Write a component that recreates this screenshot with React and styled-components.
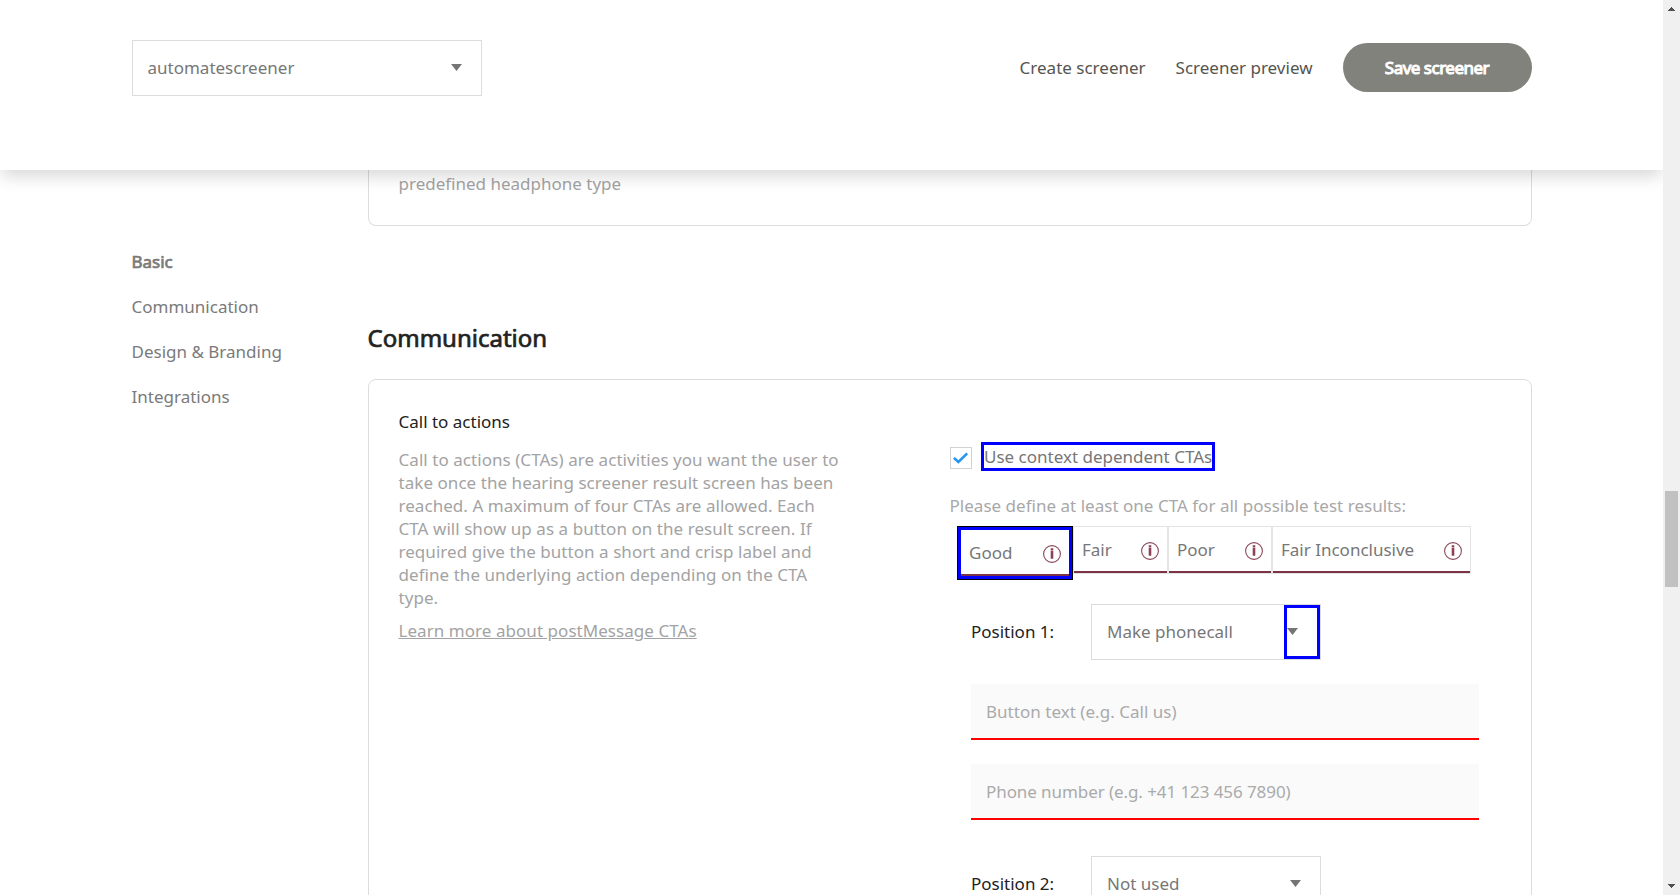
import React from "react";
import styled, { createGlobalStyle, css } from "styled-components";

const GlobalStyle = createGlobalStyle`
  * { box-sizing: border-box; }
  html, body { margin: 0; height: 100%; overflow: hidden; background: #fff; }
  body, input, button {
    font-family: "Noto Sans", "Open Sans", sans-serif;
    font-size: 17px;
    line-height: 23px;
  }
`;

const fauxBold = css`
  font-weight: 400;
  -webkit-text-stroke: 0.7px currentColor;
`;

const Page = styled.div`
  display: grid;
  grid-template-columns: minmax(0, 1fr) 17px;
  height: 895px;
  overflow: hidden;
`;

const Viewport = styled.div`
  display: flex;
  flex-direction: column;
  height: 895px;
  overflow: hidden;
`;

const Header = styled.header`
  position: relative;
  z-index: 1;
  flex: none;
  height: 170px;
  padding: 40px 131.5px 0;
  display: flex;
  justify-content: space-between;
  align-items: flex-start;
  background: #fff;
  box-shadow: 0 8px 16px -2px rgba(0, 0, 0, 0.16);
`;

const HeaderActions = styled.nav`
  display: flex;
  align-items: center;
  height: 56px;
  gap: 30px;
`;

const HeaderLink = styled.a`
  margin-top: -2px;
  color: #555550;
`;

const SaveButton = styled.button`
  width: 189px;
  height: 49px;
  padding: 0;
  margin-top: -1px;
  border: 0;
  border-radius: 25px;
  background: #82827d;
  color: #fff;
  font-weight: 400;
  letter-spacing: -0.5px;
  -webkit-text-stroke: 1px currentColor;
`;

const SelectBox = styled.div`
  display: flex;
  align-items: center;
  justify-content: space-between;
  width: ${(p) => p.$width}px;
  height: 56px;
  padding: 0 ${(p) => (p.$highlighted ? 0 : 19)}px 0 15px;
  border: 1px solid #dcdcdc;
  background: #fff;
  color: #777;
`;

const SelectValue = styled.span`
  margin-top: -2px;
`;

const ArrowHighlight = styled.span`
  display: flex;
  align-items: center;
  width: 36px;
  height: 54px;
  border: 3px solid #00f;
`;

const Arrow = styled.svg`
  display: block;
  width: 11px;
  height: 7px;
  margin-top: -2px;
  fill: #757575;
`;

const Body = styled.div`
  display: grid;
  grid-template-columns: 236px 1164px;
  padding-left: 131.5px;
`;

const SideNav = styled.nav`
  display: flex;
  flex-direction: column;
  gap: 22px;
  padding-top: 80px;
`;

const SideLink = styled.a`
  color: #7a7a7a;
  ${(p) => p.$active && fauxBold}
`;

const Content = styled.main`
  display: flex;
  flex-direction: column;
`;

const PreviousCard = styled.section`
  height: 56px;
  padding: 2px 30px 0;
  border: 1px solid #dcdcdc;
  border-top: 0;
  border-radius: 0 0 8px 8px;
  color: #a3a3a3;
`;

const Heading = styled.h2`
  ${fauxBold}
  margin: 95px 0 25px;
  font-size: 24px;
  line-height: 33px;
  color: #222;
`;

const Card = styled.section`
  display: grid;
  grid-template-columns: 551px 1fr;
  height: 560px;
  padding: 30px 30px 0;
  border: 1px solid #dcdcdc;
  border-radius: 8px;
`;

const Description = styled.div`
  width: 444px;
  color: #a3a3a3;
  letter-spacing: 0.05px;
`;

const Title = styled.h3`
  margin: 0 0 15px;
  font-size: 17px;
  font-weight: 400;
  letter-spacing: 0;
  color: #222;
`;

const Paragraph = styled.p`
  margin: 0 0 10px;
`;

const Link = styled.a`
  text-decoration: underline;
`;

const Settings = styled.div`
  padding-top: 32px;
`;

const CheckRow = styled.label`
  display: flex;
  align-items: flex-start;
  gap: 9.5px;
`;

const Checkbox = styled.span`
  display: flex;
  width: 22px;
  height: 22px;
  margin-top: 5px;
  border: 1px solid #d2d2d2;
`;

const CheckLabel = styled.span`
  height: 29px;
  border: 3px solid #00f;
  color: #777;
`;

const Hint = styled.p`
  margin: 23px 0 9px;
  color: #a8a8a8;
  letter-spacing: 0.02px;
`;

const Tabs = styled.div`
  display: flex;
  align-items: flex-start;
  margin-left: 7.5px;
  height: 54px;
`;

const Tab = styled.div`
  display: flex;
  justify-content: space-between;
  width: ${(p) => p.$width}px;
  height: 48px;
  padding: 11px 8px 0;
  border: 1px solid #e4e4e4;
  box-shadow: inset 0 -2px #7d3346;
  color: #777;
`;

const SelectedTabFrame = styled.div`
  flex: none;
  width: 116px;
  height: 54px;
  border: 1px solid #000;
  padding: 3px;
  background: #00f;

  ${Tab} {
    width: 108px;
    height: 46px;
    border: 0;
    background: #fff;
  }
`;

const InfoGlyph = styled.svg`
  display: block;
  width: 18px;
  height: 18px;
  margin-top: 4px;
`;

const Positions = styled.div`
  margin: 24px 0 0 21.5px;
  width: 508px;
`;

const PositionRow = styled.div`
  display: flex;
  align-items: center;
  margin-bottom: 24px;
`;

const PositionLabel = styled.span`
  width: 120px;
  margin-top: -2px;
  color: #222;
`;

const Field = styled.input`
  display: block;
  width: 508px;
  height: 56px;
  margin: 0 0 ${(p) => p.$gap}px;
  padding: 0 15px;
  border: 0;
  border-bottom: 2px solid #f00;
  border-radius: 0;
  outline: 0;
  background: #fafafa;
  letter-spacing: ${(p) => p.$tracking}px;

  &::placeholder { color: #aaa; opacity: 1; }
`;

const ScrollTrack = styled.div`
  display: flex;
  flex-direction: column;
  align-items: center;
  height: 895px;
  padding: 7px 0;
  background: #f0f0f0;
`;

const ScrollThumb = styled.div`
  width: 13px;
  height: 96px;
  margin: 480px 0 auto;
  background: #c1c1c1;
`;

const ScrollArrow = styled.svg`
  display: block;
  width: 7px;
  height: 4px;
  fill: #505050;
  ${(p) => p.$down && "transform: rotate(180deg);"}
`;

function Caret() {
  return (
    <Arrow viewBox="0 0 11 7">
      <path d="M0 0h11L5.5 7z" />
    </Arrow>
  );
}

function Stepper({ down }) {
  return (
    <ScrollArrow $down={down} viewBox="0 0 7 4" shapeRendering="crispEdges">
      <path d="M3 0h1v1h1v1h1v1h1v1H0V3h1V2h1V1h1z" />
    </ScrollArrow>
  );
}

function Select({ value, width, highlighted }) {
  return (
    <SelectBox $width={width} $highlighted={highlighted}>
      <SelectValue>{value}</SelectValue>
      {highlighted ? (
        <ArrowHighlight>
          <Caret />
        </ArrowHighlight>
      ) : (
        <Caret />
      )}
    </SelectBox>
  );
}

function ResultTab({ label, width }) {
  return (
    <Tab $width={width}>
      {label}
      <InfoGlyph viewBox="0 0 18 18">
        <circle cx="9" cy="9" r="8.4" fill="none" stroke="#8b4a5b" strokeWidth="1.1" />
        <path d="M7.7 3.2h2.6v1.9H7.7zM7.7 5.6h2.6v8.2H7.7z" fill="#8b4156" />
      </InfoGlyph>
    </Tab>
  );
}

export default function App() {
  return (
    <>
      <GlobalStyle />
      <Page>
        <Viewport>
          <Header>
            <Select value="automatescreener" width={350} />
            <HeaderActions>
              <HeaderLink>Create screener</HeaderLink>
              <HeaderLink>Screener preview</HeaderLink>
              <SaveButton>Save screener</SaveButton>
            </HeaderActions>
          </Header>
          <Body>
            <SideNav>
              <SideLink $active>Basic</SideLink>
              <SideLink>Communication</SideLink>
              <SideLink>Design &amp; Branding</SideLink>
              <SideLink>Integrations</SideLink>
            </SideNav>
            <Content>
              <PreviousCard>predefined headphone type</PreviousCard>
              <Heading>Communication</Heading>
              <Card>
                <Description>
                  <Title>Call to actions</Title>
                  <Paragraph>
                    Call to actions (CTAs) are activities you want the user to take once the hearing
                    screener result screen has been reached. A maximum of four CTAs are allowed. Each
                    CTA will show up as a button on the result screen. If required give the button a
                    short and crisp label and define the underlying action depending on the CTA type.
                  </Paragraph>
                  <Link>Learn more about postMessage CTAs</Link>
                </Description>
                <Settings>
                  <CheckRow>
                    <Checkbox>
                      <svg width="20" height="20" viewBox="0 0 20 20" fill="none" stroke="#2196f3" strokeWidth="2.5">
                        <path d="M2.9 9.8 7.4 14 16.2 5.4" />
                      </svg>
                    </Checkbox>
                    <CheckLabel>Use context dependent CTAs</CheckLabel>
                  </CheckRow>
                  <Hint>Please define at least one CTA for all possible test results:</Hint>
                  <Tabs>
                    <SelectedTabFrame>
                      <ResultTab label="Good" />
                    </SelectedTabFrame>
                    <ResultTab label="Fair" width={95} />
                    <ResultTab label="Poor" width={104} />
                    <ResultTab label="Fair Inconclusive" width={199} />
                  </Tabs>
                  <Positions>
                    <PositionRow>
                      <PositionLabel>Position 1:</PositionLabel>
                      <Select value="Make phonecall" width={230} highlighted />
                    </PositionRow>
                    <Field placeholder="Button text (e.g. Call us)" $gap={24} $tracking={0.03} />
                    <Field placeholder="Phone number (e.g. +41 123 456 7890)" $gap={36} $tracking={-0.08} />
                    <PositionRow>
                      <PositionLabel>Position 2:</PositionLabel>
                      <Select value="Not used" width={230} />
                    </PositionRow>
                  </Positions>
                </Settings>
              </Card>
            </Content>
          </Body>
        </Viewport>
        <ScrollTrack>
          <Stepper />
          <ScrollThumb />
          <Stepper down />
        </ScrollTrack>
      </Page>
    </>
  );
}
